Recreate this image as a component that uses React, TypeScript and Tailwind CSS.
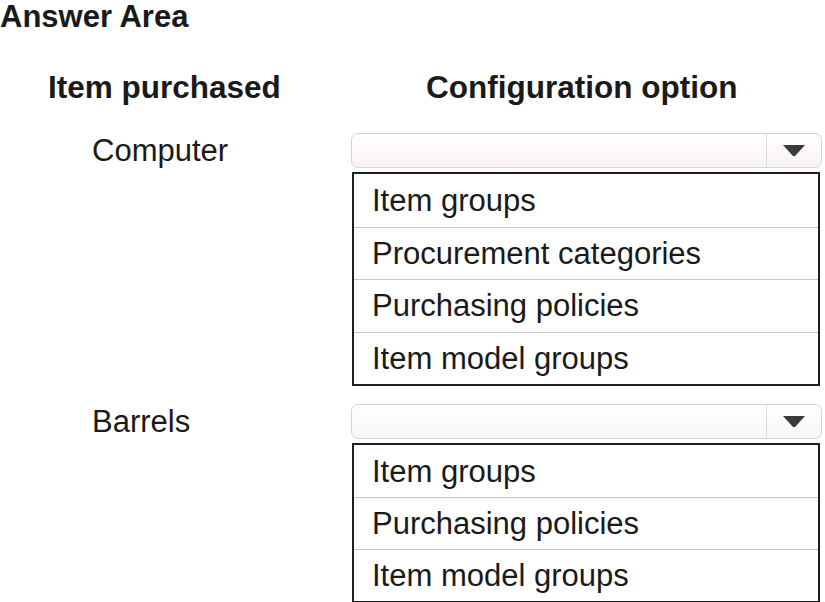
import React from "react";

function Dropdown({ tint }: { tint: string }) {
  return (
    <div
      className={`flex h-[35px] w-[471px] ml-[351px] rounded-[7px] border border-[#d4d4d4] ${tint}`}
    >
      <div className="flex-1" />
      <div className="w-[55px] border-l border-[#dcdcdc] flex items-center justify-center">
        <svg width="24" height="13" viewBox="0 0 24 13">
          <path d="M1 1 L23 1 L13.5 11.5 Q12 13 10.5 11.5 Z" fill="#3a3a3a" />
        </svg>
      </div>
    </div>
  );
}

function OptionList({ items, rowH }: { items: string[]; rowH: string }) {
  return (
    <div className="ml-[352px] w-[468px] border-2 border-[#1e1e1e] bg-white">
      {items.map((it, i) => (
        <div
          key={it}
          className={`${rowH} flex items-center pl-[18px] text-[31px] leading-none text-[#1a1a1a] ${
            i > 0 ? "border-t border-[#c8c8c8]" : ""
          }`}
        >
          {it}
        </div>
      ))}
    </div>
  );
}

export default function App() {
  return (
    <div className="w-[825px] h-[602px] bg-white overflow-hidden font-['Liberation_Sans',Arial,sans-serif] text-[#1a1a1a]">
      <div className="pl-0 text-[31px] font-bold leading-[33px]">
        Answer Area
      </div>
      <div className="flex mt-[38px] h-[34px] items-center text-[31.5px] font-bold leading-none">
        <div className="ml-[48px] w-[378px]">Item purchased</div>
        <div>Configuration option</div>
      </div>

      <div className="relative mt-[28px]">
        <div className="absolute left-[92px] top-0 h-[35px] flex items-center text-[31px] leading-none">
          Computer
        </div>
        <Dropdown tint="bg-gradient-to-b from-[#ffffff] to-[#fbf3f3]" />
      </div>
      <div className="mt-[4px]">
        <OptionList
          rowH="h-[52.5px]"
          items={[
            "Item groups",
            "Procurement categories",
            "Purchasing policies",
            "Item model groups",
          ]}
        />
      </div>

      <div className="relative mt-[18px]">
        <div className="absolute left-[92px] top-0 h-[35px] flex items-center text-[31px] leading-none">
          Barrels
        </div>
        <Dropdown tint="bg-gradient-to-b from-[#ffffff] to-[#f6f6f6]" />
      </div>
      <div className="mt-[4px]">
        <OptionList
          rowH="h-[52px]"
          items={["Item groups", "Purchasing policies", "Item model groups"]}
        />
      </div>
    </div>
  );
}
